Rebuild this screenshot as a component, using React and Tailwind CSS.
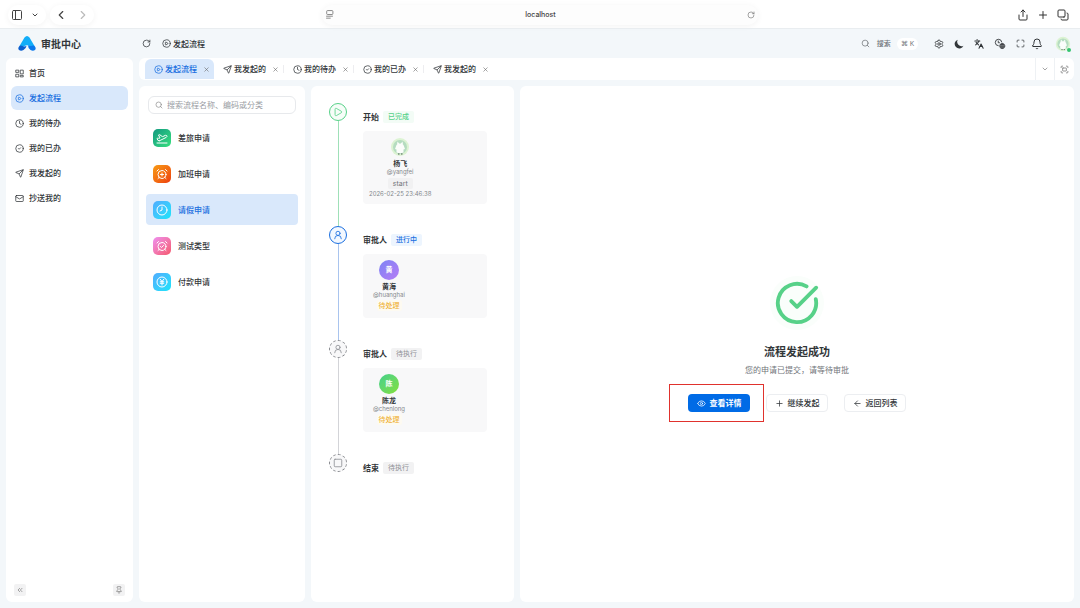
import {
  AlarmClockCheck, AlarmClockPlus, ArrowLeft, Bell, ChevronDown, ChevronLeft, ChevronRight, ChevronsLeft,
  CircleCheck, CircleCheckBig, CirclePlay, Clock, Clock8, Copy, Eye, Fullscreen, Languages,
  Mail, Maximize, PanelLeft, Pin, PlaneTakeoff, Play, Plus, RotateCw, Search, Send, Settings, Share,
  Square, UserRound, X,
} from 'lucide-react';

const NAV = [
  { label: '首页', icon: HomeIcon },
  { label: '发起流程', icon: CirclePlay, active: true },
  { label: '我的待办', icon: Clock },
  { label: '我的已办', icon: CircleCheck },
  { label: '我发起的', icon: Send },
  { label: '抄送我的', icon: Mail },
];

const TABS = [
  { id: 1, label: '发起流程', icon: CirclePlay, active: true },
  { id: 2, label: '我发起的', icon: Send },
  { id: 3, label: '我的待办', icon: Clock, divider: true },
  { id: 4, label: '我的已办', icon: CircleCheck, divider: true },
  { id: 5, label: '我发起的', icon: Send, divider: true },
];

const PROCESSES = [
  { label: '差旅申请', icon: PlaneTakeoff, color: 'from-[#12997f] to-[#38e07d]' },
  { label: '加班申请', icon: AlarmClockPlus, color: 'from-[#f79a14] to-[#ec3a10]' },
  { label: '请假申请', icon: Clock8, color: 'from-[#4facfe] to-[#10e4fa]', active: true },
  { label: '测试类型', icon: AlarmClockCheck, color: 'from-[#ee8ff0] to-[#f5576c]' },
  { label: '付款申请', icon: YenIcon, color: 'from-[#4facfe] to-[#10e4fa]' },
];

const STEPS = [
  {
    title: '开始',
    status: 'done',
    icon: Play,
    user: { name: '杨飞', account: '@yangfei', comment: 'start', time: '2026-02-25 23:46:38' },
  },
  {
    title: '审批人',
    status: 'running',
    icon: UserRound,
    user: { name: '黄海', account: '@huanghai', initial: '黄', color: 'bg-linear-to-br from-[#7c83f5] to-[#b57cf5]' },
  },
  {
    title: '审批人',
    status: 'waiting',
    icon: UserRound,
    user: { name: '陈龙', account: '@chenlong', initial: '陈', color: 'bg-linear-to-br from-[#3fd08a] to-[#84e02e]' },
  },
  { title: '结束', status: 'waiting', icon: Square },
];

const STATUS = {
  done: {
    text: '已完成',
    badge: 'bg-[#f3fcf6] font-medium text-[#57d188]',
    circle: 'border border-[#57d188] bg-[#f6fdf8] text-[#57d188]',
    line: 'bg-[#9fe0b8]',
  },
  running: {
    text: '进行中',
    badge: 'bg-[#edf5fe] font-medium text-[#1a6fe0]',
    circle: 'border border-[#1a6fe0] bg-[#f3f8ff] text-[#1a6fe0]',
    line: 'bg-[#a9c4ee]',
  },
  waiting: {
    text: '待执行',
    badge: 'bg-[#f2f2f3] text-[#8f9196]',
    circle: 'border border-dashed border-[#85878c] bg-[#f8f8f9] text-[#8f9196]',
    line: 'bg-[#d3d4d8]',
  },
};

function Logo() {
  return (
    <svg viewBox="0 0 36 30" className="h-[15px] w-[18px]" aria-hidden="true">
      <path d="M13 3Q18-3 23 3L33 20Q28 22 23 20Q18 17 13 20Q8 23 3 20Z" fill="#12adf8" />
      <path d="M1 23Q3 17 8 19.500Q12 22 17 20Q16 25 11 28Q6 31 2 28Q0 26 1 23Z" fill="#0a5fd0" />
      <path d="M35 23Q33 17 28 19.500Q24 21 20 18.500Q20 25 25 28Q30 31 34 28Q36 26 35 23Z" fill="#0a78ec" />
    </svg>
  );
}

function HomeIcon({ className }) {
  return (
    <svg viewBox="0 0 24 24" fill="none" stroke="currentColor" strokeWidth="2" strokeLinejoin="round" className={className}>
      <path d="M2 3h8v6H2zM2 14h8v7H2zM14 3h8v10h-8zM14 17h8v4h-8z" />
    </svg>
  );
}

function YenIcon({ className }) {
  return (
    <svg viewBox="0 0 24 24" fill="none" stroke="currentColor" strokeWidth="2" strokeLinecap="round" className={className}>
      <circle cx="12" cy="12" r="10" />
      <path d="M8.500 6.500 12 11l3.500-4.500M8.500 11.500h7M8.500 14.500h7M12 11v7" />
    </svg>
  );
}

function MoonIcon({ className }) {
  return (
    <svg viewBox="0 0 24 24" fill="currentColor" className={className}>
      <path d="M9 1.500A11 11 0 1 0 22.800 16 10.500 10.500 0 0 1 9 1.500Z" />
    </svg>
  );
}

function TimezoneIcon({ className }) {
  return (
    <svg viewBox="0 0 24 24" fill="none" stroke="currentColor" strokeWidth="1.800" strokeLinecap="round" className={className}>
      <path d="M8.500 15.500A6.500 6.500 0 1 1 15.500 8" />
      <path d="M8.500 6v3.500H11" />
      <circle cx="16.500" cy="16" r="5" fill="currentColor" />
      <path d="M12 14.500h9M12 18h9" stroke="#f3f7fa" strokeWidth="0.800" />
    </svg>
  );
}

function PhotoAvatar({ className }) {
  return (
    <svg viewBox="0 0 40 40" className={className} role="img" aria-label="杨飞">
      <circle cx="20" cy="20" r="18" fill="#dcf3d3" />
      <circle cx="20" cy="20" r="14" fill="#b5dcc0" />
      <path d="M13 16q1-3 7-3t7 3l3 8-3 1v6q-7 3-14 0v-6l-3-1z" fill="#fbfdfb" />
      <path d="M14 15l1-6 4 5zM21 14l4-5 1 6z" fill="#fbfdfb" />
      <path d="M16 34h3M22 34h3" stroke="#4f5f55" strokeWidth="2" />
    </svg>
  );
}

function BrowserBar() {
  return (
    <div className="flex h-7 shrink-0 items-center bg-white px-2 pt-px text-[#444]">
      <div className="flex flex-1 items-center">
        <div className="flex h-5 items-center gap-2 rounded-full px-[3px] shadow-[0_1px_6px_rgba(0,0,0,0.05)]">
          <button type="button" aria-label="边栏"><PanelLeft className="size-3" /></button>
          <button type="button" aria-label="标签组" className="pr-1"><ChevronDown className="size-2" strokeWidth={3} /></button>
        </div>
        <div className="ml-1 flex h-5 items-center gap-2 rounded-full px-1 shadow-[0_1px_6px_rgba(0,0,0,0.05)]">
          <button type="button" aria-label="后退"><ChevronLeft className="size-[14px]" /></button>
          <button type="button" aria-label="前进" className="text-[#bbb]"><ChevronRight className="size-[14px]" /></button>
        </div>
      </div>
      <div className="flex h-5 w-[41%] items-center rounded-full bg-[#fdfdfd] px-[3px] shadow-[0_1px_6px_rgba(0,0,0,0.05)]">
        <svg viewBox="0 0 16 16" className="size-[9px] text-[#777]" fill="none" stroke="currentColor" strokeWidth="1.500">
          <rect x="3" y="1" width="11" height="7" rx="1.500" />
          <path d="M2 11h12M2 14.500h8" />
        </svg>
        <span className="flex-1 text-center text-[7px] leading-[12px] font-medium">localhost</span>
        <button type="button" aria-label="重新载入" className="text-[#777]"><RotateCw className="size-2" /></button>
      </div>
      <div className="flex flex-1 items-center justify-end gap-2 text-[#333]">
        <button type="button" aria-label="共享"><Share className="size-3" /></button>
        <button type="button" aria-label="新标签页"><Plus className="size-3" /></button>
        <button type="button" aria-label="标签页概览" className="pr-[3px]"><Copy className="size-3 -scale-100" /></button>
      </div>
    </div>
  );
}

function Header() {
  return (
    <header className="flex h-[30px] shrink-0 items-center border-t border-[#e9edf0] pr-[9px] text-[#323639]">
      <div className="flex w-[139px] items-center gap-[5px] pl-[18px]">
        <Logo />
        <span className="text-[10px] leading-[14px] font-bold">审批中心</span>
      </div>
      <button type="button" aria-label="刷新" className="ml-[3px]"><RotateCw className="size-[9px]" /></button>
      <div className="ml-[11px] flex items-center gap-[2px]">
        <CirclePlay className="size-[9px]" />
        <span className="text-[8px] leading-[12px] font-medium">发起流程</span>
      </div>
      <div className="ml-auto flex items-center">
        <button type="button" className="mr-4 flex items-center text-[7px] leading-[12px] text-[#71757a]">
          <Search className="size-[9px]" />
          <span className="ml-[7px] font-medium">搜索</span>
          <kbd className="ml-[6px] rounded-md bg-white px-1 font-sans">⌘ K</kbd>
        </button>
        <div className="flex items-center gap-[10px]">
          <button type="button" aria-label="偏好设置"><Settings className="size-[10px]" /></button>
          <button type="button" aria-label="主题"><MoonIcon className="size-[10px]" /></button>
          <button type="button" aria-label="语言"><Languages className="size-[10px]" strokeWidth={2.5} /></button>
          <button type="button" aria-label="时区"><TimezoneIcon className="size-3" /></button>
          <button type="button" aria-label="全屏"><Maximize className="size-[9px]" /></button>
        </div>
        <button type="button" aria-label="通知" className="ml-[6px]"><Bell className="size-3" /></button>
        <button type="button" aria-label="用户" className="relative ml-3">
          <PhotoAvatar className="size-4" />
          <span className="absolute right-0 bottom-0 size-1 rounded-full bg-[#35c46f]" />
        </button>
      </div>
    </header>
  );
}

function Sidebar() {
  return (
    <aside className="flex w-[127px] shrink-0 flex-col rounded-md bg-white px-[5px] pt-[3px] pb-[6px]">
      <nav className="flex flex-col gap-px">
        {NAV.map(({ label, icon: Icon, active }) => (
          <a
            key={label}
            href="#"
            className={`flex h-6 items-center gap-[5px] rounded-md pl-1 text-[8px] leading-[12px] font-medium ${active ? 'bg-[#d9e8fb] text-[#1a6fe0]' : 'text-[#323639]'}`}
          >
            <Icon className="size-[9px]" />
            {label}
          </a>
        ))}
      </nav>
      <div className="mt-auto flex justify-between px-[3px] text-[#777]">
        <button type="button" aria-label="收起" className="flex size-3 items-center justify-center rounded-xs bg-[#f2f2f3]">
          <ChevronsLeft className="size-2" />
        </button>
        <button type="button" aria-label="固定" className="flex size-3 items-center justify-center rounded-xs bg-[#f2f2f3]">
          <Pin className="size-2" />
        </button>
      </div>
    </aside>
  );
}

function TabBar() {
  return (
    <div className="flex h-[22px] shrink-0 rounded-md bg-white pl-[6px]">
      {TABS.map(({ id, label, icon: Icon, active, divider }) => (
        <div key={id} className="flex items-center">
          {divider && <span className="h-2 w-px bg-[#ededf0]" />}
          <div
            className={`flex h-5 w-[69px] items-center pl-[9px] text-[8px] leading-[12px] font-medium ${active ? 'rounded-t-md bg-[#d9e8fb] text-[#1a6fe0]' : 'text-[#323639]'}`}
          >
            <Icon className="size-[9px]" />
            <span className="ml-[2px]">{label}</span>
            <button type="button" aria-label="关闭" className="ml-[6px] text-[#666]"><X className="size-[7px]" /></button>
          </div>
        </div>
      ))}
      <div className="ml-auto flex text-[#777]">
        <button type="button" aria-label="更多标签" className="flex w-[19px] items-center justify-center border-l border-[#eef1f4]">
          <ChevronDown className="size-2" />
        </button>
        <button type="button" aria-label="最大化内容" className="flex w-5 items-center justify-center border-l border-[#eef1f4]">
          <Fullscreen className="size-[9px]" />
        </button>
      </div>
    </div>
  );
}

function ProcessList() {
  return (
    <section className="w-[166px] shrink-0 rounded-md bg-white px-[7px] pt-[10px]">
      <label className="mx-[2px] flex h-[18px] items-center gap-1 rounded-md border border-[#e7e9ec] px-[6px]">
        <Search className="size-2 shrink-0 text-[#888]" />
        <input
          type="text"
          aria-label="搜索流程"
          placeholder="搜索流程名称、编码或分类"
          className="min-w-0 flex-1 text-[8px] leading-[12px] outline-none placeholder:text-[#9a9da3]"
        />
      </label>
      <div className="mt-2 flex flex-col gap-[5px]">
        {PROCESSES.map(({ label, icon: Icon, color, active }) => (
          <button
            key={label}
            type="button"
            className={`flex h-[31px] items-center gap-[7px] rounded-sm pl-[7px] text-[8px] leading-[12px] font-medium ${active ? 'bg-[#d9e8fb] text-[#1a6fe0]' : 'text-[#323639]'}`}
          >
            <span className={`flex size-[18px] items-center justify-center rounded-[5px] bg-linear-to-br text-white ${color}`}>
              <Icon className="size-3" />
            </span>
            {label}
          </button>
        ))}
      </div>
    </section>
  );
}

function UserCard({ user }) {
  return (
    <div className="mt-2 flex w-[124px] rounded-sm bg-[#f8f8f9] p-[6px]">
      <div className="flex min-w-10 flex-col items-center">
        {user.initial ? (
          <span className={`flex size-5 items-center justify-center rounded-full text-[7px] leading-[8px] font-bold text-white ${user.color}`}>
            {user.initial}
          </span>
        ) : (
          <PhotoAvatar className="size-5" />
        )}
        <span className="mt-[3px] text-[7px] leading-[8px] font-bold text-[#323639]">{user.name}</span>
        <span className="text-[6px] leading-[8px] text-[#85888d]">{user.account}</span>
        {user.comment ? (
          <span className="mt-[2px] rounded-xs bg-[#f1f1f2] px-[5px] text-[7px] leading-[11px] text-[#71757a]">{user.comment}</span>
        ) : (
          <span className="mt-px mb-px rounded-xs bg-[#fdfaf1] px-[2px] text-[7px] leading-[11px] font-medium text-[#efb23c]">待处理</span>
        )}
        {user.time && <span className="mt-px text-[6px] leading-[8px] text-[#85888d]">{user.time}</span>}
      </div>
    </div>
  );
}

function FlowPanel() {
  return (
    <section className="w-[203px] shrink-0 rounded-md bg-white pt-[17px] pl-[18px]">
      {STEPS.map(({ title, status, icon: Icon, user }, i) => (
        <div key={i} className="flex gap-4">
          <div className="flex w-[18px] flex-col items-center">
            <span className={`flex size-[18px] shrink-0 items-center justify-center rounded-full ${STATUS[status].circle}`}>
              <Icon className="size-[10px]" />
            </span>
            {i < STEPS.length - 1 && <span className={`w-px flex-1 ${STATUS[status].line}`} />}
          </div>
          <div className={user ? 'pt-2 pb-[22px]' : 'pt-2'}>
            <div className="flex h-3 items-center gap-1">
              <h3 className="text-[8px] leading-[12px] font-bold text-[#323639]">{title}</h3>
              <span className={`rounded-xs px-[5px] text-[7px] leading-[12px] ${STATUS[status].badge}`}>{STATUS[status].text}</span>
            </div>
            {user && <UserCard user={user} />}
          </div>
        </div>
      ))}
    </section>
  );
}

function ResultPanel() {
  const outline = 'flex h-[18px] w-[62px] items-center justify-center gap-1 rounded-sm border border-[#eceef1] bg-white text-[8px] leading-[12px] font-medium text-[#323639]';
  return (
    <section className="flex min-w-0 flex-1 flex-col items-center justify-center rounded-md bg-white">
      <div className="flex size-[54px] items-center justify-center rounded-full bg-[#fafefb]">
        <CircleCheckBig className="size-[46px] text-[#57d188]" />
      </div>
      <h2 className="mt-[14px] text-[11px] leading-[16px] font-bold text-[#323639]">流程发起成功</h2>
      <p className="mt-1 text-[8px] leading-[12px] text-[#71757a]">您的申请已提交，请等待审批</p>
      <div className="mt-[18px] flex gap-4">
        <div className="relative">
          <button
            type="button"
            className="flex h-[18px] w-[62px] items-center justify-center gap-1 rounded-sm bg-[#006be6] text-[8px] leading-[12px] font-bold text-white"
          >
            <Eye className="size-[9px]" />
            查看详情
          </button>
          <span className="pointer-events-none absolute -top-[10px] -right-[14px] -bottom-[10px] -left-[19px] border border-[#e0322d]" />
        </div>
        <button type="button" className={outline}>
          <Plus className="size-[9px]" />
          继续发起
        </button>
        <button type="button" className={outline}>
          <ArrowLeft className="size-[9px]" />
          返回列表
        </button>
      </div>
    </section>
  );
}

export default function App() {
  return (
    <div className="flex min-h-screen flex-col bg-[#f3f7fa] font-['Inter','Noto_Sans_CJK_SC',sans-serif]">
      <BrowserBar />
      <Header />
      <div className="flex flex-1 gap-[6px] px-[6px] pb-[6px]">
        <Sidebar />
        <main className="flex min-w-0 flex-1 flex-col gap-[6px]">
          <TabBar />
          <div className="flex flex-1 gap-[6px]">
            <ProcessList />
            <FlowPanel />
            <ResultPanel />
          </div>
        </main>
      </div>
    </div>
  );
}
